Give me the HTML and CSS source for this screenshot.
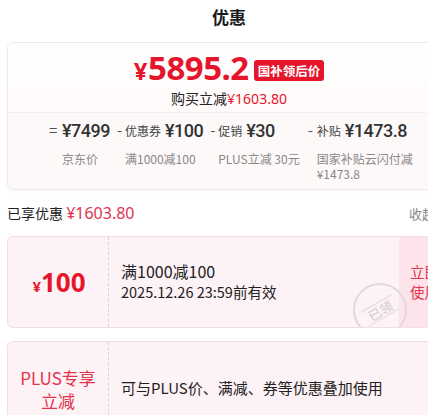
FILE: index.html
```html
<!DOCTYPE html>
<html lang="zh-CN">
  <head>
    <meta charset="UTF-8" />
    <meta name="viewport" content="width=device-width, initial-scale=1.0" />
    <title>优惠</title>
    <link rel="stylesheet" href="styles.css">
  </head>
  <body>
    <div class="sheet">
      <h2 class="title">优惠</h2>

      <div class="summary">
        <div class="summary-top">
          <div class="final">
            <span class="final-price"><span class="yen">¥</span>5895.2</span>
            <span class="tag">国补领后价</span>
          </div>
          <div class="save">购买立减<span class="red">¥1603.80</span></div>
        </div>
        <div class="breakdown">
          <div class="item first">
            <span class="op">=</span>
            <div>
              <div class="main"><span class="amount">¥7499</span></div>
              <div class="sub">京东价</div>
            </div>
          </div>
          <div class="item">
            <span class="op">-</span>
            <div>
              <div class="main"><span class="label">优惠券</span><span class="amount">¥100</span></div>
              <div class="sub">满1000减100</div>
            </div>
          </div>
          <div class="item">
            <span class="op">-</span>
            <div>
              <div class="main"><span class="label">促销</span><span class="amount">¥30</span></div>
              <div class="sub">PLUS立减 30元</div>
            </div>
          </div>
          <div class="item last">
            <span class="op">-</span>
            <div>
              <div class="main"><span class="label">补贴</span><span class="amount">¥1473.8</span></div>
              <div class="sub">国家补贴云闪付减¥1473.8</div>
            </div>
          </div>
        </div>
      </div>

      <div class="enjoyed">
        <div>已享优惠 <span class="red-light">¥1603.80</span></div>
        <div class="fold">收起</div>
      </div>

      <div class="coupon">
        <div class="coupon-left">
          <span class="coupon-value"><span class="small-yen">¥</span>100</span>
        </div>
        <div class="coupon-body">
          <div class="coupon-name">满1000减100</div>
          <div class="coupon-date">2025.12.26 23:59前有效</div>
          <div class="stamp"><span>已领</span></div>
        </div>
        <div class="coupon-action">立即<br>使用</div>
      </div>

      <div class="coupon">
        <div class="coupon-left">
          <span class="plus-title">PLUS专享<br>立减</span>
        </div>
        <div class="coupon-body">
          <div class="coupon-desc">可与PLUS价、满减、券等优惠叠加使用</div>
        </div>
      </div>
    </div>
  </body>
</html>
```
FILE: styles.css
```css
html {
  overflow: hidden;
}

body {
  margin: 0;
  font-family: "Noto Sans CJK SC", "Noto Sans", sans-serif;
  background-color: #fff;
  color: #1a1a1a;
}

.sheet {
  width: 444px;
  padding: 0 7px;
}

.title {
  margin: 0;
  height: 34px;
  line-height: 34px;
  text-align: center;
  font-size: 17px;
  font-weight: bold;
  color: #1a1a1a;
}

.summary {
  margin-top: 8px;
  border: 1px solid #f3e6e8;
  border-radius: 7px;
  overflow: hidden;
  box-shadow: 0 1px 3px rgba(0, 0, 0, 0.04);
}

.summary-top {
  height: 69px;
  display: flex;
  flex-direction: column;
  align-items: center;
  background: linear-gradient(#fff, #fffafa);
  border-bottom: 1px solid #f8eef0;
}

.final {
  display: flex;
  align-items: center;
  gap: 5px;
  height: 40px;
  margin-top: 6px;
}

.final-price {
  font-family: "Noto Sans", sans-serif;
  font-size: 33px;
  line-height: 40px;
  font-weight: bold;
  color: #e5162c;
  letter-spacing: -0.5px;
}

.final-price .yen {
  font-size: 24px;
  margin-right: 1px;
}

.tag {
  background-color: #e5162c;
  color: #fff;
  font-size: 12.5px;
  font-weight: bold;
  padding: 0 4px;
  height: 21px;
  line-height: 21px;
  border-radius: 3px;
  margin-top: 3px;
}

.save {
  font-size: 14px;
  line-height: 18px;
  color: #222;
}

.red {
  color: #e5162c;
  font-family: "Noto Sans", sans-serif;
}

.breakdown {
  display: flex;
  padding: 2px 0 8px 41px;
  background-color: #fdf9f9;
}

.item {
  display: flex;
  margin-right: 7px;
}

.op {
  font-size: 15px;
  color: #555;
  line-height: 30px;
  width: 8px;
}

.item.first .op {
  width: 13px;
}

.main {
  height: 30px;
  display: flex;
  align-items: center;
  white-space: nowrap;
}

.label {
  font-size: 12px;
  color: #444;
  margin-right: 4px;
}

.amount {
  font-family: Roboto, sans-serif;
  font-size: 18px;
  font-weight: 500;
  color: #333;
  letter-spacing: -0.5px;
}

.sub {
  font-size: 12px;
  color: #888;
  line-height: 15px;
  margin-top: 6px;
  white-space: nowrap;
}

.item.last {
  margin-left: 1px;
}

.item.last .op {
  width: 9px;
}

.item.last .sub {
  white-space: normal;
  width: 98px;
}

.enjoyed {
  display: flex;
  justify-content: space-between;
  align-items: center;
  height: 46px;
  font-size: 14px;
  color: #222;
}

.red-light {
  color: #e0334f;
  font-family: "Noto Sans", sans-serif;
  font-size: 16px;
}

.fold {
  color: #888;
  font-size: 13px;
  padding-right: 16px;
}

.coupon {
  display: flex;
  height: 90px;
  margin-bottom: 13px;
  background-color: #fdf2f5;
  border: 1px solid #f4dde2;
  border-radius: 6px;
  overflow: hidden;
}

.coupon-left {
  width: 100px;
  flex-shrink: 0;
  display: flex;
  align-items: center;
  justify-content: center;
  border-right: 1px dashed #e6cfd4;
}

.coupon-value {
  font-family: "Noto Sans", sans-serif;
  font-size: 26px;
  font-weight: bold;
  color: #e5162c;
  margin-left: 2px;
}

.small-yen {
  font-size: 15px;
}

.plus-title {
  font-size: 17px;
  line-height: 23px;
  color: #e3344c;
  text-align: center;
  margin-top: 3px;
}

.coupon-body {
  flex: 1;
  position: relative;
  padding-left: 12px;
  display: flex;
  flex-direction: column;
  justify-content: center;
}

.coupon-name {
  font-size: 16px;
  line-height: 21px;
  color: #222;
  margin-top: -2px;
}

.coupon-date {
  font-size: 14.5px;
  line-height: 20px;
  color: #222;
}

.coupon-desc {
  font-size: 15px;
  color: #222;
  margin-top: 1px;
}

.stamp {
  position: absolute;
  left: 244px;
  top: 46px;
  width: 50px;
  height: 50px;
  border: 2px solid #e2d9db;
  border-radius: 50%;
  display: flex;
  align-items: center;
  justify-content: center;
  transform: rotate(-30deg);
}

.stamp span {
  font-size: 13px;
  color: #d3c9cb;
  border-top: 1px solid #e2d9db;
  border-bottom: 1px solid #e2d9db;
  padding: 0 5px;
  line-height: 15px;
}

.coupon-action {
  width: 51px;
  box-sizing: border-box;
  flex-shrink: 0;
  background-color: #fde4eb;
  color: #e3344c;
  font-size: 14.5px;
  line-height: 20px;
  padding-left: 11px;
  display: flex;
  align-items: center;
}
```
